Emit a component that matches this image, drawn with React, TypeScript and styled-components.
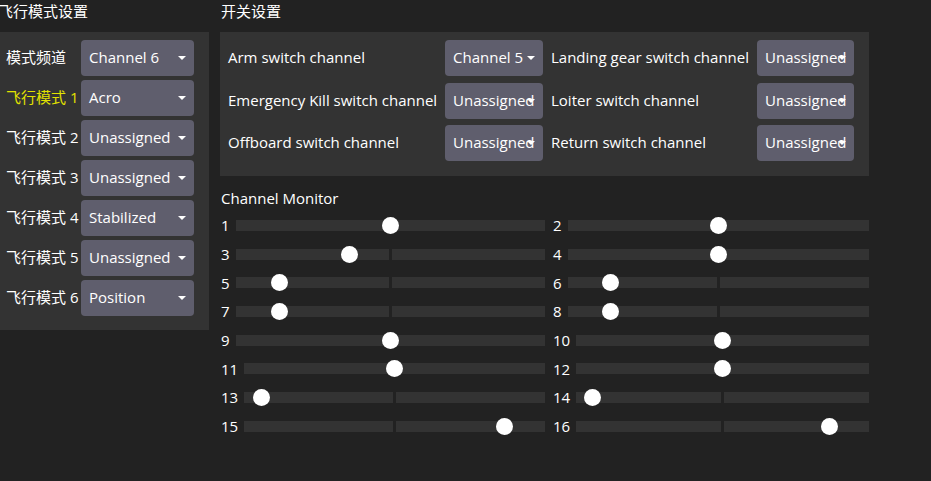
import { Fragment } from 'react';
import styled, { createGlobalStyle } from 'styled-components';

const GlobalStyle = createGlobalStyle`
  html, body {
    margin: 0;
    padding: 0;
    background: #222222;
    overflow: hidden;
  }
  body {
    font-family: 'Open Sans', 'Noto Sans CJK SC', sans-serif;
    font-size: 15px;
    color: #ffffff;
  }
`;

const Page = styled.div`
  display: flex;
  align-items: flex-start;
  gap: 11px;
  width: 931px;
  height: 481px;
  background: #222222;
`;

const Column = styled.div<{ $width: number }>`
  display: flex;
  flex-direction: column;
  width: ${(p) => p.$width}px;
  flex-shrink: 0;
`;

const Title = styled.div<{ $shift?: number }>`
  height: 22px;
  line-height: 22px;
  margin-bottom: 10px;
  margin-left: ${(p) => p.$shift ?? 0}px;
  white-space: nowrap;
`;

const Panel = styled.div<{ $cols: string; $colGap: number; $rowGap: number; $pad: string }>`
  display: grid;
  grid-template-columns: ${(p) => p.$cols};
  grid-auto-rows: 36px;
  column-gap: ${(p) => p.$colGap}px;
  row-gap: ${(p) => p.$rowGap}px;
  padding: ${(p) => p.$pad};
  background: #333333;
  align-items: center;
`;

const Label = styled.div<{ $active?: boolean }>`
  line-height: 20px;
  margin-bottom: 2px;
  white-space: nowrap;
  color: ${(p) => (p.$active ? '#e2e200' : '#ffffff')};
`;

const ComboBox = styled.div`
  position: relative;
  height: 36px;
  box-sizing: border-box;
  display: flex;
  align-items: center;
  padding: 0 0 2px 8px;
  border-radius: 4px;
  background: #5f5e6d;
  white-space: nowrap;
`;

const Arrow = styled.span`
  position: absolute;
  right: 8px;
  top: 16px;
  width: 0;
  height: 0;
  border-left: 4px solid transparent;
  border-right: 4px solid transparent;
  border-top: 4px solid #ffffff;
`;

const MonitorTitle = styled.div`
  margin-top: 12px;
  height: 20px;
  line-height: 20px;
  padding-left: 1px;
  margin-bottom: 3px;
`;

const MonitorGrid = styled.div`
  display: grid;
  grid-template-columns: 325px 317px;
  grid-auto-rows: 28.7px;
  column-gap: 7px;
`;

const ChannelRow = styled.div`
  display: flex;
  align-items: center;
  gap: 6px;
  padding-left: 1px;
`;

const ChannelNum = styled.span`
  line-height: 20px;
`;

const Track = styled.div`
  position: relative;
  flex: 1;
  height: 11px;
  display: flex;
  gap: 3px;
`;

const TrackHalf = styled.div`
  flex: 1;
  background: #333333;
`;

const Thumb = styled.div`
  position: absolute;
  top: -3px;
  width: 17px;
  height: 17px;
  border-radius: 50%;
  background: #ffffff;
`;

function Combo({ value }: { value: string }) {
  return (
    <ComboBox>
      {value}
      <Arrow />
    </ComboBox>
  );
}

const flightModes = [
  { label: '模式频道', value: 'Channel 6' },
  { label: '飞行模式 1', value: 'Acro', active: true },
  { label: '飞行模式 2', value: 'Unassigned' },
  { label: '飞行模式 3', value: 'Unassigned' },
  { label: '飞行模式 4', value: 'Stabilized' },
  { label: '飞行模式 5', value: 'Unassigned' },
  { label: '飞行模式 6', value: 'Position' },
];

const switches = [
  ['Arm switch channel', 'Channel 5', 'Landing gear switch channel', 'Unassigned'],
  ['Emergency Kill switch channel', 'Unassigned', 'Loiter switch channel', 'Unassigned'],
  ['Offboard switch channel', 'Unassigned', 'Return switch channel', 'Unassigned'],
];

// fraction of the slider travel for channels 1..16
const channels = [0.5, 0.5, 0.36, 0.5, 0.12, 0.12, 0.12, 0.12, 0.5, 0.5, 0.5, 0.5, 0.03, 0.03, 0.888, 0.887];

export default function App() {
  return (
    <>
      <GlobalStyle />
      <Page>
        <Column $width={209}>
          <Title $shift={-2}>飞行模式设置</Title>
          <Panel $cols="71px 113px" $colGap={4} $rowGap={4} $pad="8px 15px 14px 6px">
            {flightModes.map((m) => (
              <Fragment key={m.label}>
                <Label $active={m.active}>{m.label}</Label>
                <Combo value={m.value} />
              </Fragment>
            ))}
          </Panel>
        </Column>
        <Column $width={649}>
          <Title $shift={1}>开关设置</Title>
          <Panel $cols="209px 98px 198px 97px" $colGap={8} $rowGap={6.5} $pad="8px 15px 15px 8px">
            {switches.map((row) => (
              <Fragment key={row[0]}>
                <Label>{row[0]}</Label>
                <Combo value={row[1]} />
                <Label>{row[2]}</Label>
                <Combo value={row[3]} />
              </Fragment>
            ))}
          </Panel>
          <MonitorTitle>Channel Monitor</MonitorTitle>
          <MonitorGrid>
            {channels.map((f, i) => (
              <ChannelRow key={i}>
                <ChannelNum>{i + 1}</ChannelNum>
                <Track>
                  <TrackHalf />
                  <TrackHalf />
                  <Thumb style={{ left: `calc(${f} * (100% - 17px))` }} />
                </Track>
              </ChannelRow>
            ))}
          </MonitorGrid>
        </Column>
      </Page>
    </>
  );
}
